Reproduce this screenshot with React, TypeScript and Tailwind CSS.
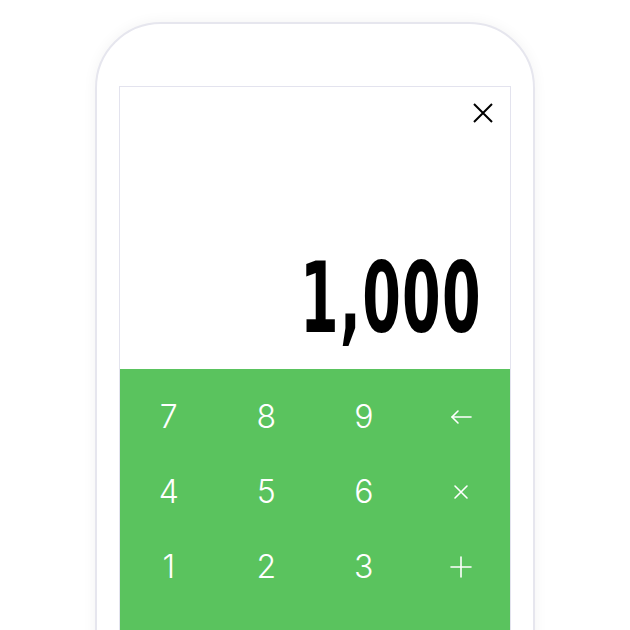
import React from 'react';

const keys = ['7', '8', '9', 'back', '4', '5', '6', 'times', '1', '2', '3', 'plus'];

const KeyLabel: React.FC<{ k: string }> = ({ k }) => {
    if (k === 'back') {
        return (
            <svg width="24" height="16" viewBox="0 0 24 16" fill="none" stroke="white" strokeWidth="1.6" strokeLinecap="round" strokeLinejoin="round">
                <path d="M22 8H3" />
                <path d="M9 2L3 8l6 6" />
            </svg>
        );
    }
    if (k === 'times') {
        return (
            <svg width="16" height="16" viewBox="0 0 16 16" fill="none" stroke="white" strokeWidth="1.6" strokeLinecap="round">
                <path d="M2 2l12 12M14 2L2 14" />
            </svg>
        );
    }
    if (k === 'plus') {
        return (
            <svg width="22" height="22" viewBox="0 0 22 22" fill="none" stroke="white" strokeWidth="1.6" strokeLinecap="round">
                <path d="M11 1v20M1 11h20" />
            </svg>
        );
    }
    return <span>{k}</span>;
};

export default function App() {
    return (
        <div className="w-[630px] h-[630px] overflow-hidden bg-white pt-[22px]">
            <div className="mx-auto w-[440px] h-[700px] rounded-t-[66px] border-2 border-[#e6e6ee] bg-white px-[22px] pt-[62px] shadow-[0_0_14px_rgba(0,0,0,0.05)]">
                <div className="border border-[#e3e3ee] bg-white">
                    <div className="h-[282px] flex flex-col">
                        <div className="flex justify-end pt-[16px] pr-[17px]">
                            <svg width="20" height="20" viewBox="0 0 20 20" fill="none" stroke="black" strokeWidth="2">
                                <path d="M1 1l18 18M19 1L1 19" />
                            </svg>
                        </div>
                        <div className="flex-1 flex items-end justify-end pr-[28px] pb-[22px]">
                            <span className="inline-block origin-right scale-x-[0.63] text-[98px] leading-none font-bold text-black tracking-[2px]" style={{ fontFamily: '"DejaVu Sans Condensed", sans-serif' }}>
                                1,000
                            </span>
                        </div>
                    </div>
                    <div className="bg-[#5ac35e] pt-[10px] pb-[40px] grid grid-cols-4 text-white text-[32px] font-light" style={{ fontFamily: 'Inter, "Noto Sans", sans-serif' }}>
                        {keys.map(k => (
                            <div key={k} className="h-[75px] flex items-center justify-center">
                                <KeyLabel k={k} />
                            </div>
                        ))}
                    </div>
                </div>
            </div>
        </div>
    );
}
